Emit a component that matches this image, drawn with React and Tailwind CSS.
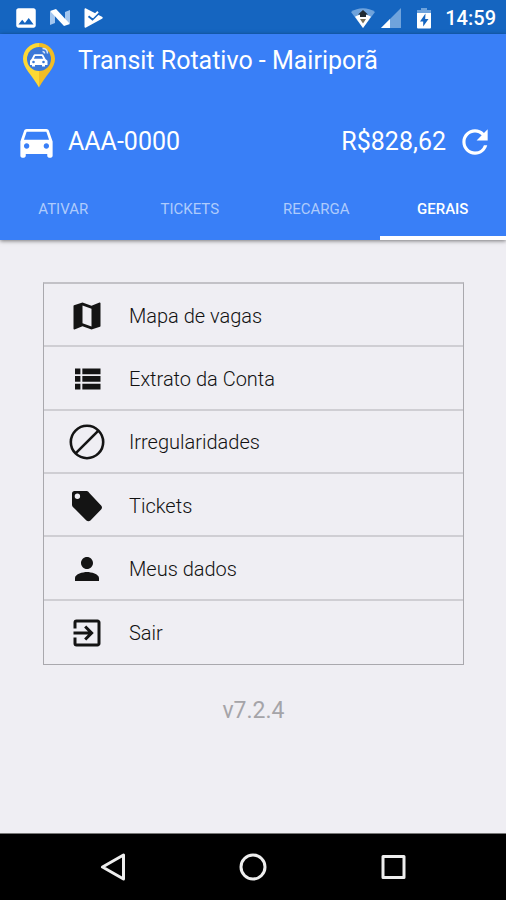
import React from "react";
import { clsx } from "clsx";
import { MdDirectionsCar, MdExitToApp, MdMap, MdPerson, MdPhoto, MdRefresh } from "react-icons/md";

const TABS = ["ATIVAR", "TICKETS", "RECARGA", "GERAIS"];

function ListIcon({ className }) {
  return (
    <svg viewBox="0 0 24 24" fill="currentColor" className={className}>
      <path d="M4 5h3.600v3.900H4zM4 10h3.600v3.900H4zM4 15.100h3.600V19H4zM8.900 5H21v3.900H8.900zM8.900 10H21v3.900H8.900zM8.900 15.100H21V19H8.900z" />
    </svg>
  );
}

function BanIcon({ className }) {
  return (
    <svg viewBox="0 0 36 36" fill="none" stroke="currentColor" strokeWidth="2.6" className={className}>
      <circle cx="18" cy="18" r="16.2" />
      <path d="M6.600 29.400 29.400 6.600" />
    </svg>
  );
}

function TagIcon({ className }) {
  return (
    <svg viewBox="0 0 24 24" fill="currentColor" className={className}>
      <path d="M21.400 11.600l-8-8.400C13 2.500 12.500 2 11.800 2H3.600C2.700 2 2 2.700 2 3.600v7.600c0 .6.2 1 .6 1.400l9 9c.8.700 1.900.700 2.700 0l7.100-7.200c.8-.8.8-2 0-2.800zM5.600 7.300a1.800 1.800 0 1 1 0-3.600 1.800 1.800 0 0 1 0 3.600z" />
    </svg>
  );
}

const MENU = [
  { label: "Mapa de vagas", icon: MdMap },
  { label: "Extrato da Conta", icon: ListIcon },
  { label: "Irregularidades", icon: BanIcon },
  { label: "Tickets", icon: TagIcon },
  { label: "Meus dados", icon: MdPerson },
  { label: "Sair", icon: MdExitToApp },
];

function StatusBar() {
  return (
    <div className="flex h-[34px] items-center justify-between bg-[#1565c0] pt-[2px] pr-[10px] pl-[13px] text-white">
      <div className="flex items-center gap-[10px]">
        <MdPhoto className="size-[26px]" />
        {/* Android N */}
        <svg viewBox="0 0 22 20" className="h-5 w-[22px]">
          <path d="M1 4 6 2v13l-5 2zM16 4l5-2v13l-5 2z" fill="#a3c6ef" />
          <path d="M1 3 7 1l14 15-6 2z" fill="#fff" />
        </svg>
        {/* Play Store update */}
        <svg viewBox="0 0 20 20" className="ml-[2px] size-5">
          <path d="M1.500 1.200c0-.9.8-1.200 1.500-.8L19 8.800c1 .6 1 1.500 0 2L3 19.600c-.8.400-1.500.1-1.500-.8z" fill="#fff" />
          <path d="m5.500 8.200 4 3.300 8-8" fill="none" stroke="#1565c0" strokeWidth="2" />
          <path d="m8 7.200 2 1.600 5-5" fill="none" stroke="#fff" strokeWidth="2" />
        </svg>
      </div>
      <div className="flex items-center">
        <svg viewBox="0 0 24 20" className="h-5 w-6">
          <path d="M0 4C7-1 17-1 24 4L12 20z" fill="#6fa3dc" />
          <path d="M4 8.800C9 5.600 15 5.600 20 8.800L12 20z" fill="#fff" />
          <path d="m12 2 5 4.500h-2V9H9V6.500H7z" fill="#202a33" />
          <path d="M9 11h6l-3 4.500z" fill="#77705c" />
        </svg>
        <svg viewBox="0 0 20 20" className="ml-[6px] size-5">
          <path d="M20 0v20H0z" fill="#6fa3dc" />
          <path d="M9 11v9H0z" fill="#fff" />
        </svg>
        <svg viewBox="0 0 14 22" className="ml-4 h-[22px] w-[14px]">
          <path d="M4 1h6v2h4v4H0V3h4z" fill="#6fa3dc" />
          <path d="M0 6h14v14.500a1 1 0 0 1-1 1H1a1 1 0 0 1-1-1z" fill="#fff" />
          <path d="M8.500 6.500 3 14.500h3.200v5L11.500 12H8.200z" fill="#1565c0" />
        </svg>
        <span className="ml-[14px] text-xl leading-6 font-medium">14:59</span>
      </div>
    </div>
  );
}

function Logo() {
  return (
    <svg viewBox="0 0 34 46" className="h-[46px] w-[34px]">
      <path d="M17 1C8 1 1 8 1 17c0 9 9 16 16 28.500z" fill="#fdd835" />
      <path d="M17 1c9 0 16 7 16 16 0 9-9 16-16 28.500z" fill="#f2bd24" />
      <circle cx="17" cy="17" r="12" fill="#3b78d8" />
      <path d="M9.500 17 11.500 13.300c.4-.8.9-1.100 1.700-1.100h6.600c.8 0 1.300.3 1.700 1.100L23.500 17l2 1.800V23h-2.500v1.500h-3V23h-7v1.500h-3V23H8v-4.200z" fill="#fff" />
      <path d="M11.800 16.800 13.200 14h6.600l1.400 2.800z" fill="#3b78d8" />
      <circle cx="11.500" cy="20" r="1.300" fill="#3b78d8" />
      <circle cx="21.500" cy="20" r="1.300" fill="#3b78d8" />
      <path d="M20.500 6.500c3 0 5 2 5 5M20.500 9.500c1.300 0 2 .7 2 2" fill="none" stroke="#d5e5fb" strokeWidth="1.500" />
    </svg>
  );
}

function Header() {
  return (
    <header className="z-10 bg-[#397ff7] text-white shadow-[0_1px_4px_rgba(0,0,0,0.5)]">
      <div className="flex items-start gap-[22px] px-[22px] pt-2">
        <Logo />
        <h1 className="pt-[5px] text-[25px] leading-7">Transit Rotativo - Mairiporã</h1>
      </div>
      <div className="flex items-center pt-8 pr-3 pl-[15px] text-[25px] leading-7">
        <MdDirectionsCar className="size-[43px]" />
        <span className="ml-[10px]">AAA-0000</span>
        <span className="ml-auto">R$828,62</span>
        <button type="button" aria-label="Atualizar saldo" className="ml-[10px]">
          <MdRefresh className="size-[38px]" />
        </button>
      </div>
      <nav className="mt-[13px] grid grid-cols-4">
        {TABS.map((tab) => {
          const active = tab === "GERAIS";
          return (
            <button
              key={tab}
              type="button"
              aria-current={active ? "page" : undefined}
              className={clsx(
                "h-16 border-b-4 pt-[6px] text-[15px]",
                active ? "border-white font-medium" : "border-transparent text-[#aecbfc]"
              )}
            >
              {tab}
            </button>
          );
        })}
      </nav>
    </header>
  );
}

function Menu() {
  return (
    <ul className="grid min-h-[383px] auto-rows-fr divide-y-2 divide-[#cfced3] border border-t-2 border-[#a9a8ad] border-t-[#c2c1c6]">
      {MENU.map(({ label, icon: Icon }) => (
        <li key={label} className="flex">
          <button
            type="button"
            className="flex flex-1 items-center gap-6 pt-[2px] pl-[25px] text-left text-xl font-light text-[#111]"
          >
            <Icon className="size-9 text-[#141414]" />
            {label}
          </button>
        </li>
      ))}
    </ul>
  );
}

function SystemNav() {
  return (
    <nav className="flex h-[67px] items-center justify-center gap-28 border-t border-[#777] bg-black text-[#eee]">
      <button type="button" aria-label="Voltar">
        <svg viewBox="0 0 28 28" fill="none" stroke="currentColor" strokeWidth="3" strokeLinejoin="round" className="size-7">
          <path d="M24.500 2v24L3.500 14z" />
        </svg>
      </button>
      <button type="button" aria-label="Início">
        <svg viewBox="0 0 28 28" fill="none" stroke="currentColor" strokeWidth="3" className="size-7">
          <circle cx="14" cy="14" r="12" />
        </svg>
      </button>
      <button type="button" aria-label="Recentes">
        <svg viewBox="0 0 28 28" fill="none" stroke="currentColor" strokeWidth="3" strokeLinejoin="round" className="size-7">
          <path d="M4 3.500h21v21H4z" />
        </svg>
      </button>
    </nav>
  );
}

export default function App() {
  return (
    <div className="flex min-h-screen flex-col bg-[#efeef3] font-[Roboto,sans-serif]">
      <StatusBar />
      <Header />
      <main className="flex-1 pt-[42px] pr-[42px] pl-[43px]">
        <Menu />
        <p className="pt-[30px] text-center text-[23px] leading-8 text-[#a5a4a8]">v7.2.4</p>
      </main>
      <SystemNav />
    </div>
  );
}
